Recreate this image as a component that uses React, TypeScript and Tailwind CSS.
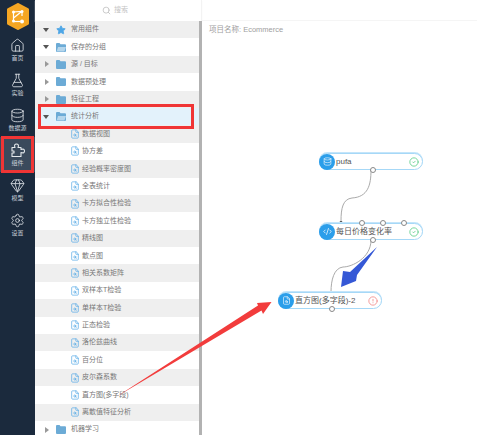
import { CircleAlert, CircleCheck, CodeXml, Database, FileSearch, FlaskConical, Gem, House, Search, Settings, Star } from "lucide-react";
import type { ReactNode } from "react";

type TreeRow = {
  label: string;
  kind: "star" | "open" | "closed" | "leaf";
  selected?: boolean;
};

function PuzzleIcon() {
  return (
    <svg width="15" height="15" viewBox="0 0 15 15" fill="none" stroke="#e4e8ec" strokeWidth="1.1" strokeLinejoin="round">
      <path d="M2 4.5 H5 C4 2 5 1 6.5 1 S9 2 8 4.5 H11 V6.5 C13.5 5.5 14.5 6.5 14.5 8 S13.5 10.5 11 9.5 V13.5 H2 V10 H4 V8 H2 Z" />
    </svg>
  );
}

const navItems = [
  { label: "首页", icon: <House size={15} strokeWidth={1.3} className="text-[#e4e8ec]" /> },
  { label: "实验", icon: <FlaskConical size={15} strokeWidth={1.3} className="text-[#e4e8ec]" /> },
  { label: "数据源", icon: <Database size={15} strokeWidth={1.3} className="text-[#e4e8ec]" /> },
  { label: "组件", icon: <PuzzleIcon />, active: true },
  { label: "模型", icon: <Gem size={15} strokeWidth={1.3} className="text-[#e4e8ec]" /> },
  { label: "设置", icon: <Settings size={15} strokeWidth={1.3} className="text-[#e4e8ec]" /> },
];

const treeRows: TreeRow[] = [
  { label: "常用组件", kind: "star" },
  { label: "保存的分组", kind: "open" },
  { label: "源 / 目标", kind: "closed" },
  { label: "数据预处理", kind: "closed" },
  { label: "特征工程", kind: "closed" },
  { label: "统计分析", kind: "open", selected: true },
  { label: "数据视图", kind: "leaf" },
  { label: "协方差", kind: "leaf" },
  { label: "经验概率密度图", kind: "leaf" },
  { label: "全表统计", kind: "leaf" },
  { label: "卡方拟合性检验", kind: "leaf" },
  { label: "卡方独立性检验", kind: "leaf" },
  { label: "精线图", kind: "leaf" },
  { label: "散点图", kind: "leaf" },
  { label: "相关系数矩阵", kind: "leaf" },
  { label: "双样本T检验", kind: "leaf" },
  { label: "单样本T检验", kind: "leaf" },
  { label: "正态检验", kind: "leaf" },
  { label: "洛伦兹曲线", kind: "leaf" },
  { label: "百分位", kind: "leaf" },
  { label: "皮尔森系数", kind: "leaf" },
  { label: "直方图(多字段)", kind: "leaf" },
  { label: "离散值特征分析", kind: "leaf" },
  { label: "机器学习", kind: "closed" },
];

function Logo() {
  return (
    <svg width="22" height="27" viewBox="0 0 22 27" className="mt-[3px] mb-[2px]">
      <path d="M11 1.5 L20.5 6.5 V20.5 L11 25.5 L1.5 20.5 V6.5 Z" fill="#f5a623" stroke="#f5a623" strokeWidth="3" strokeLinejoin="round" />
      <g stroke="#fff" strokeWidth="1.2" fill="none">
        <path d="M6.5 17.5 L6.5 9 L15 8.5 L15 13" />
        <path d="M6.5 15 L14 9" />
        <path d="M6.5 18.5 H13" />
      </g>
      <circle cx="6.5" cy="9" r="1.5" fill="#fff" />
      <circle cx="15" cy="8.5" r="1.5" fill="#fff" />
      <circle cx="6.5" cy="18" r="1.5" fill="#fff" />
      <circle cx="15" cy="18.5" r="2" fill="#fff" />
    </svg>
  );
}

function Folder({ open }: { open: boolean }) {
  return (
    <svg width="10" height="9" viewBox="0 0 10 9" className="shrink-0">
      <path d="M0 1 a1 1 0 0 1 1-1 h2.5 l1 1.3 H9 a1 1 0 0 1 1 1 V8 a1 1 0 0 1-1 1 H1 a1 1 0 0 1-1-1 Z" fill="#6cabd6" />
      {open ? <path d="M2 4 H10 L8.4 8.4 H0.6 Z" fill="#b5d6ec" /> : null}
    </svg>
  );
}

function Caret({ open }: { open: boolean }) {
  return open ? (
    <span className="h-0 w-0 border-x-[3px] border-t-[4px] border-x-transparent border-t-[#555]" />
  ) : (
    <span className="ml-[1px] h-0 w-0 border-y-[3px] border-l-[4px] border-y-transparent border-l-[#999]" />
  );
}

function Row({ row, index }: { row: TreeRow; index: number }) {
  const bg = row.selected ? "bg-[#e3f2fb]" : index % 2 === 0 ? "bg-[#efefef]" : "bg-white";

  if (row.kind === "leaf") {
    return (
      <div className={`flex h-[17.4px] items-center pl-[35px] ${bg}`}>
        <FileSearch size={10} strokeWidth={1.6} className="shrink-0 text-[#4ea6e6]" />
        <span className="ml-[2px] whitespace-nowrap text-[7px] text-[#777]">{row.label}</span>
      </div>
    );
  }

  return (
    <div className={`flex h-[17.4px] items-center ${bg}`}>
      <div className="flex w-[21px] justify-center pl-[1px]">
        <Caret open={row.kind !== "closed"} />
      </div>
      <div className="mr-[5px] flex w-[10px] justify-center">
        {row.kind === "star" ? (
          <Star size={10} className="shrink-0 fill-[#4ea6e6] text-[#4ea6e6]" />
        ) : (
          <Folder open={row.kind === "open"} />
        )}
      </div>
      <span className="whitespace-nowrap text-[7px] text-[#777]">{row.label}</span>
    </div>
  );
}

function Port({ className }: { className: string }) {
  return <span className={`absolute h-[6px] w-[6px] rounded-full border border-[#888] bg-white ${className}`} />;
}

function FlowNode({ className, icon, label, status, children }: { className: string; icon: ReactNode; label: string; status: ReactNode; children?: ReactNode }) {
  return (
    <div className={`absolute flex h-[17px] w-[104px] items-center rounded-full border border-[#a6d8f7] bg-white shadow-[0_-1px_0_#c4e5fa] ${className}`}>
      <span className="ml-[-1px] flex h-[16px] w-[16px] shrink-0 items-center justify-center rounded-full bg-[#2b9eea] text-white">{icon}</span>
      <span className="ml-[1px] flex-1 whitespace-nowrap text-[8px] text-[#555]">{label}</span>
      <span className="mr-[3px] flex">{status}</span>
      {children}
    </div>
  );
}

export default function App() {
  return (
    <div className="relative flex h-[435px] w-[477px] overflow-hidden bg-white font-['Liberation_Sans','Noto_Sans_CJK_SC',sans-serif]">
      <aside className="flex w-[35px] shrink-0 flex-col items-center bg-[#1b2a3d]">
        <Logo />
        {navItems.map((item) => (
          <div key={item.label} className={`flex h-[35px] w-full flex-col items-center justify-center ${item.active ? "bg-[#3b4a5c]" : ""}`}>
            {item.icon}
            <span className="mt-[2px] text-[6px] leading-[7px] text-[#c9d0d8]">{item.label}</span>
          </div>
        ))}
      </aside>

      <section className="flex w-[167px] shrink-0 flex-col">
        <div className="flex h-[21px] items-center justify-center gap-[3px] border-r border-[#f3f3f3] pr-[6px] shadow-[0_1px_1px_#f0f0f0]">
          <Search size={9} className="text-[#bbb]" />
          <span className="text-[7px] text-[#c4c4c4]">搜索</span>
        </div>
        <div className="flex flex-1 overflow-hidden">
          <div className="w-[164px] shrink-0">
            {treeRows.map((row, index) => (
              <Row key={row.label} row={row} index={index} />
            ))}
          </div>
          <div className="w-[3px] bg-[#b2b2b2]" />
        </div>
      </section>

      <main className="relative flex-1">
        <div className="h-[21px] border-b border-[#f5f5f5]" />
        <p className="mt-[3px] pl-[7px] text-[7.5px] text-[#a0a0a0]">项目名称: Ecommerce</p>

        <svg width="275" height="435" className="absolute top-0 left-0">
          <path d="M169 170 C169 185 166 197 150 198 C141 199 139 208 139 221" fill="none" stroke="#aaa" />
          <path d="M169 240 C169 258 150 267 141 267 C132 268 129 280 129 292" fill="none" stroke="#aaa" />
          <path d="M137.5 221 h3 l-1.5 2 Z M127.5 292 h3 l-1.5 2 Z" fill="#555" />
        </svg>

        <FlowNode
          className="top-[153px] left-[117px]"
          icon={<Database size={9} strokeWidth={1.6} />}
          label="pufa"
          status={<CircleCheck size={10} className="text-[#5fce8a]" />}
        >
          <Port className="top-[13px] left-[50px]" />
        </FlowNode>

        <FlowNode
          className="top-[223px] left-[117px]"
          icon={<CodeXml size={9} strokeWidth={2} />}
          label="每日价格变化率"
          status={<CircleCheck size={10} className="text-[#5fce8a]" />}
        >
          <Port className="top-[-4px] left-[39px]" />
          <Port className="top-[-4px] left-[60px]" />
          <Port className="top-[-4px] left-[81px]" />
          <Port className="top-[13px] left-[50px]" />
        </FlowNode>

        <FlowNode
          className="top-[292px] left-[76px]"
          icon={<FileSearch size={9} strokeWidth={1.6} />}
          label="直方图(多字段)-2"
          status={<CircleAlert size={10} className="text-[#f08a8a]" />}
        >
          <Port className="top-[13px] left-[50px]" />
        </FlowNode>
      </main>

      {/* annotations drawn over the screenshot */}
      <div className="pointer-events-none absolute top-[136px] left-[1px] h-[37px] w-[33px] border-[3px] border-[#f03535]" />
      <div className="pointer-events-none absolute top-[104px] left-[38px] h-[25px] w-[156px] border-[3px] border-[#f03535]" />
      <svg width="477" height="435" className="pointer-events-none absolute top-0 left-0">
        <polygon points="116,397 258,305.5 257,303 271.5,302 263,314 261.5,310.5" fill="#f23c3c" />
        <polygon points="377,247 357,275 356,281 341,287 343,271 350,272" fill="#3558d6" />
      </svg>
    </div>
  );
}
